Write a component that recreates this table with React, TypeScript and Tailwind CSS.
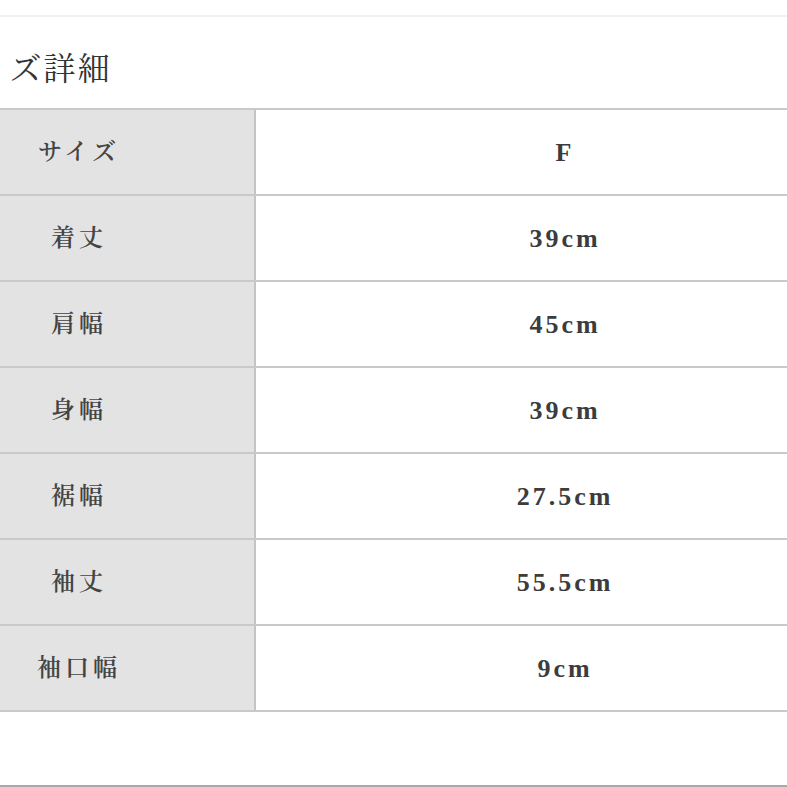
import React from "react";

const rows: { label: string; value: string }[] = [
  { label: "サイズ", value: "F" },
  { label: "着丈", value: "39cm" },
  { label: "肩幅", value: "45cm" },
  { label: "身幅", value: "39cm" },
  { label: "裾幅", value: "27.5cm" },
  { label: "袖丈", value: "55.5cm" },
  { label: "袖口幅", value: "9cm" },
];

export default function App() {
  return (
    <div
      className="w-[787px] h-[787px] overflow-hidden bg-white relative text-[#3a3a3a]"
      style={{ fontFamily: '"Liberation Serif", "Noto Serif CJK JP", "Noto Sans CJK JP", serif' }}
    >
      <div className="h-[15px]" />
      <div className="h-[2px] bg-[#f0f0f0]" />
      <div className="h-[91px] flex items-center pt-[12px] ml-[-56px]">
        <h2 className="text-[32px] tracking-[2px] font-normal text-[#333] whitespace-nowrap">サイズ詳細</h2>
      </div>
      <div className="w-[970px] ml-[-96px] border-t-2 border-[#c9c9c9]">
        {rows.map((r) => (
          <div key={r.label} className="flex h-[86px] border-b-2 border-[#c9c9c9]">
            <div className="w-[352px] shrink-0 bg-[#e3e3e3] border-r-2 border-[#c4c4c4] flex items-center justify-center text-[24px] tracking-[4px] font-semibold text-[#444]">
              {r.label}
            </div>
            <div className="flex-1 flex items-center justify-center text-[26px] tracking-[3px] font-semibold text-[#3c3c3c]">
              {r.value}
            </div>
          </div>
        ))}
      </div>
      <div className="absolute left-0 right-0 bottom-0 h-[2px] bg-[#a8a8a8]" />
    </div>
  );
}
